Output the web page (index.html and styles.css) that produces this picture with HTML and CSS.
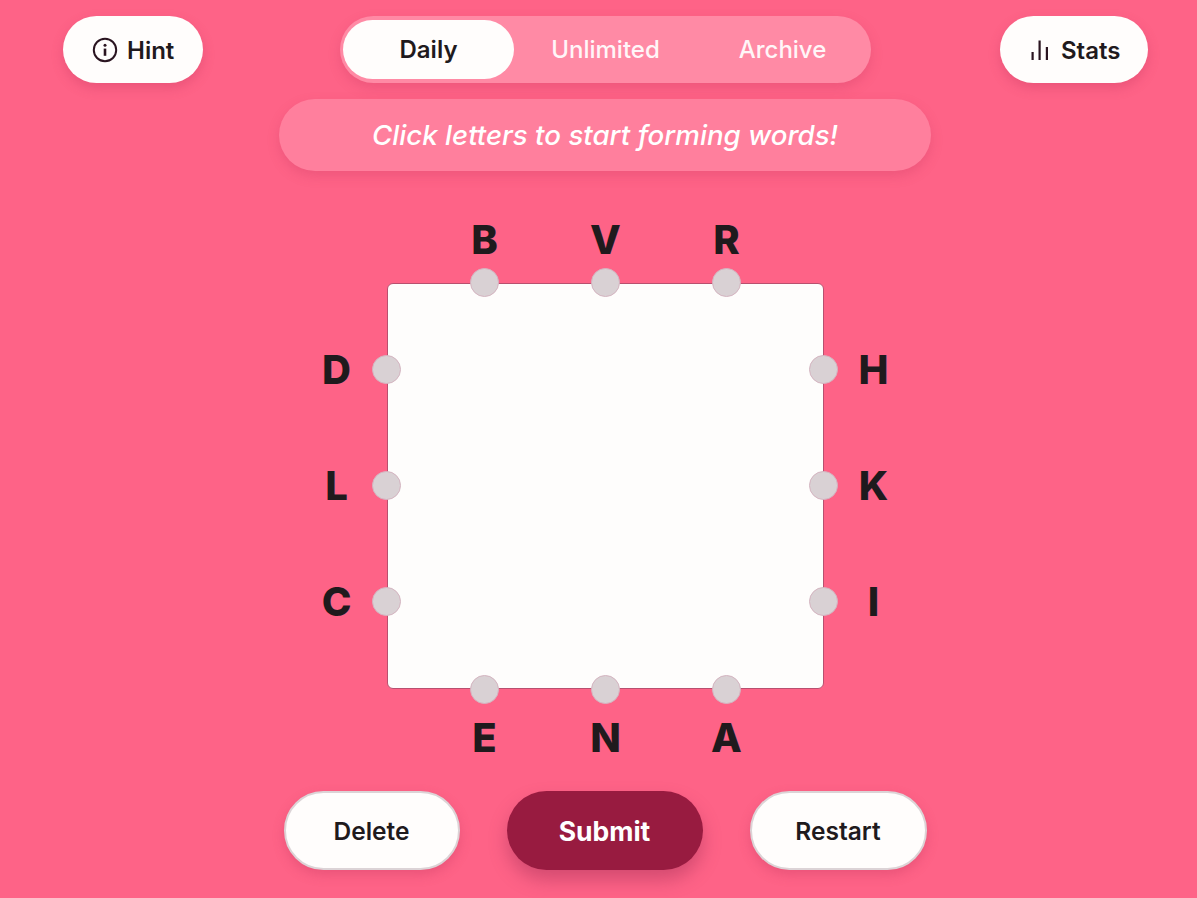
FILE: index.html
```html
<!DOCTYPE html>
<html lang="en">
	<head>
		<meta charset="UTF-8" />
		<meta name="viewport" content="width=device-width, initial-scale=1.0" />
		<title>Letter Boxed</title>
		<link rel="stylesheet" href="styles.css">
	</head>
	<body>
		<main class="page">
			<header class="topbar">
				<button class="pill hint-btn">
					<svg class="icon-info" viewBox="0 0 26 26" width="26" height="26" fill="none" stroke="#2a1420" stroke-width="2">
						<circle cx="13" cy="13" r="11.2"/>
						<circle cx="13" cy="8.2" r="1.5" fill="#2a1420" stroke="none"/>
						<path d="M13 11.6v7.2" stroke-width="2.6"/>
					</svg>
					<span>Hint</span>
				</button>
				<nav class="modes">
					<span class="mode active">Daily</span>
					<span class="mode">Unlimited</span>
					<span class="mode">Archive</span>
				</nav>
				<button class="pill stats-btn">
					<svg class="icon-stats" viewBox="0 0 18 20" width="18" height="20" fill="#2a1420">
						<rect x="0.5" y="12" width="2.2" height="8"/>
						<rect x="7.5" y="0.5" width="2.2" height="19.5"/>
						<rect x="14.8" y="7" width="2.2" height="13"/>
					</svg>
					<span>Stats</span>
				</button>
			</header>

			<p class="banner">Click letters to start forming words!</p>

			<section class="board">
				<div class="side top">
					<div class="node"><span class="dot"></span><b class="letter">B</b></div>
					<div class="node"><span class="dot"></span><b class="letter">V</b></div>
					<div class="node"><span class="dot"></span><b class="letter">R</b></div>
				</div>
				<div class="side left">
					<div class="node"><span class="dot"></span><b class="letter">D</b></div>
					<div class="node"><span class="dot"></span><b class="letter">L</b></div>
					<div class="node"><span class="dot"></span><b class="letter">C</b></div>
				</div>
				<div class="side right">
					<div class="node"><span class="dot"></span><b class="letter">H</b></div>
					<div class="node"><span class="dot"></span><b class="letter">K</b></div>
					<div class="node"><span class="dot"></span><b class="letter">I</b></div>
				</div>
				<div class="side bottom">
					<div class="node"><span class="dot"></span><b class="letter">E</b></div>
					<div class="node"><span class="dot"></span><b class="letter">N</b></div>
					<div class="node"><span class="dot"></span><b class="letter">A</b></div>
				</div>
			</section>

			<footer class="actions">
				<button class="action">Delete</button>
				<button class="action submit">Submit</button>
				<button class="action">Restart</button>
			</footer>
		</main>
	</body>
</html>
```

FILE: styles.css
```css
* {
	padding: 0;
	margin: 0;
	box-sizing: border-box;
}
html, body {
	height: 100%;
	overflow: hidden;
}
body {
	background-color: #fe6387;
	color: #1f1a1d;
	font-family: "Inter", "Liberation Sans", sans-serif;
}
button {
	font-family: inherit;
	border: none;
	color: inherit;
}
.page {
	display: flex;
	flex-direction: column;
	align-items: center;
	padding: 16px 50px 0 63px;
}

/* top row */
.topbar {
	align-self: stretch;
	margin-right: -1px;
	display: grid;
	grid-template-columns: 1fr auto 1fr;
	align-items: center;
}
.pill {
	height: 67px;
	border-radius: 34px;
	background-color: #fffdfc;
	box-shadow: 0 5px 12px rgba(190, 50, 90, 0.3);
	display: flex;
	align-items: center;
	font-size: 24px;
	font-weight: 600;
}
.pill span {
	padding-top: 1px;
}
.hint-btn {
	width: 140px;
	padding-left: 29px;
	gap: 9px;
}
.stats-btn {
	width: 148px;
	padding-left: 31px;
	gap: 12px;
	justify-self: end;
}
.modes {
	width: 531px;
	height: 67px;
	border-radius: 34px;
	background-color: #ff8aa5;
	box-shadow: 0 5px 12px rgba(190, 50, 90, 0.25);
	padding: 4px 3px;
	display: flex;
	font-size: 24px;
	font-weight: 500;
	color: #fff6f8;
}
.mode {
	flex: none;
	width: 177px;
	display: flex;
	align-items: center;
	justify-content: center;
}
.mode.active {
	width: 171px;
	border-radius: 30px;
	background-color: #fffdfc;
	color: #1f1a1d;
	font-weight: 600;
	margin-right: 3px;
}

.banner {
	width: 652px;
	height: 72px;
	margin-top: 16px;
	border-radius: 36px;
	background-color: #ff7f9d;
	box-shadow: 0 5px 12px rgba(190, 50, 90, 0.25);
	display: flex;
	align-items: center;
	justify-content: center;
	color: #fff;
	font-size: 27.7px;
	font-style: italic;
	font-weight: 500;
}

/* puzzle square */
.board {
	position: relative;
	width: 437px;
	height: 406px;
	margin-top: 112px;
	background-color: #fefdfc;
	border: 1px solid #b8506f;
	border-radius: 6px;
}
.side {
	position: absolute;
	display: flex;
	justify-content: center;
}
.side.top, .side.bottom {
	left: 0;
	right: 0;
	gap: 92px;
}
.side.top { top: -16px; }
.side.bottom { bottom: -16px; }
.side.left, .side.right {
	top: -2px;
	bottom: 0;
	flex-direction: column;
	gap: 87px;
}
.side.left { left: -16px; }
.side.right { right: -15px; }

.node {
	position: relative;
	width: 29px;
	height: 29px;
}
.dot {
	display: block;
	width: 29px;
	height: 29px;
	border-radius: 50%;
	background-color: #d9d1d4;
	border: 1px solid #d4b4c0;
}
.letter {
	position: absolute;
	width: 44px;
	text-align: center;
	font-size: 40px;
	line-height: 44px;
	font-weight: 800;
	color: #1f1a1d;
}
.top .letter { left: -7px; top: -50px; }
.bottom .letter { left: -7px; bottom: -56px; }
.left .letter { left: -57px; top: -7px; }
.right .letter { right: -58px; top: -7px; }

/* bottom buttons */
.actions {
	display: flex;
	gap: 47px;
	margin-top: 102px;
}
.action {
	width: 176px;
	height: 79px;
	border-radius: 40px;
	background-color: #fffdfc;
	border: 2px solid #dcd3d6;
	box-shadow: 0 5px 12px rgba(190, 50, 90, 0.3);
	font-size: 24.5px;
	font-weight: 600;
}
.action:last-child {
	width: 177px;
}
.action.submit {
	width: 196px;
	background-color: #981b40;
	border: none;
	color: #fff;
	font-size: 26.5px;
	font-weight: 700;
	box-shadow: 0 10px 18px rgba(150, 40, 80, 0.4);
}
```
